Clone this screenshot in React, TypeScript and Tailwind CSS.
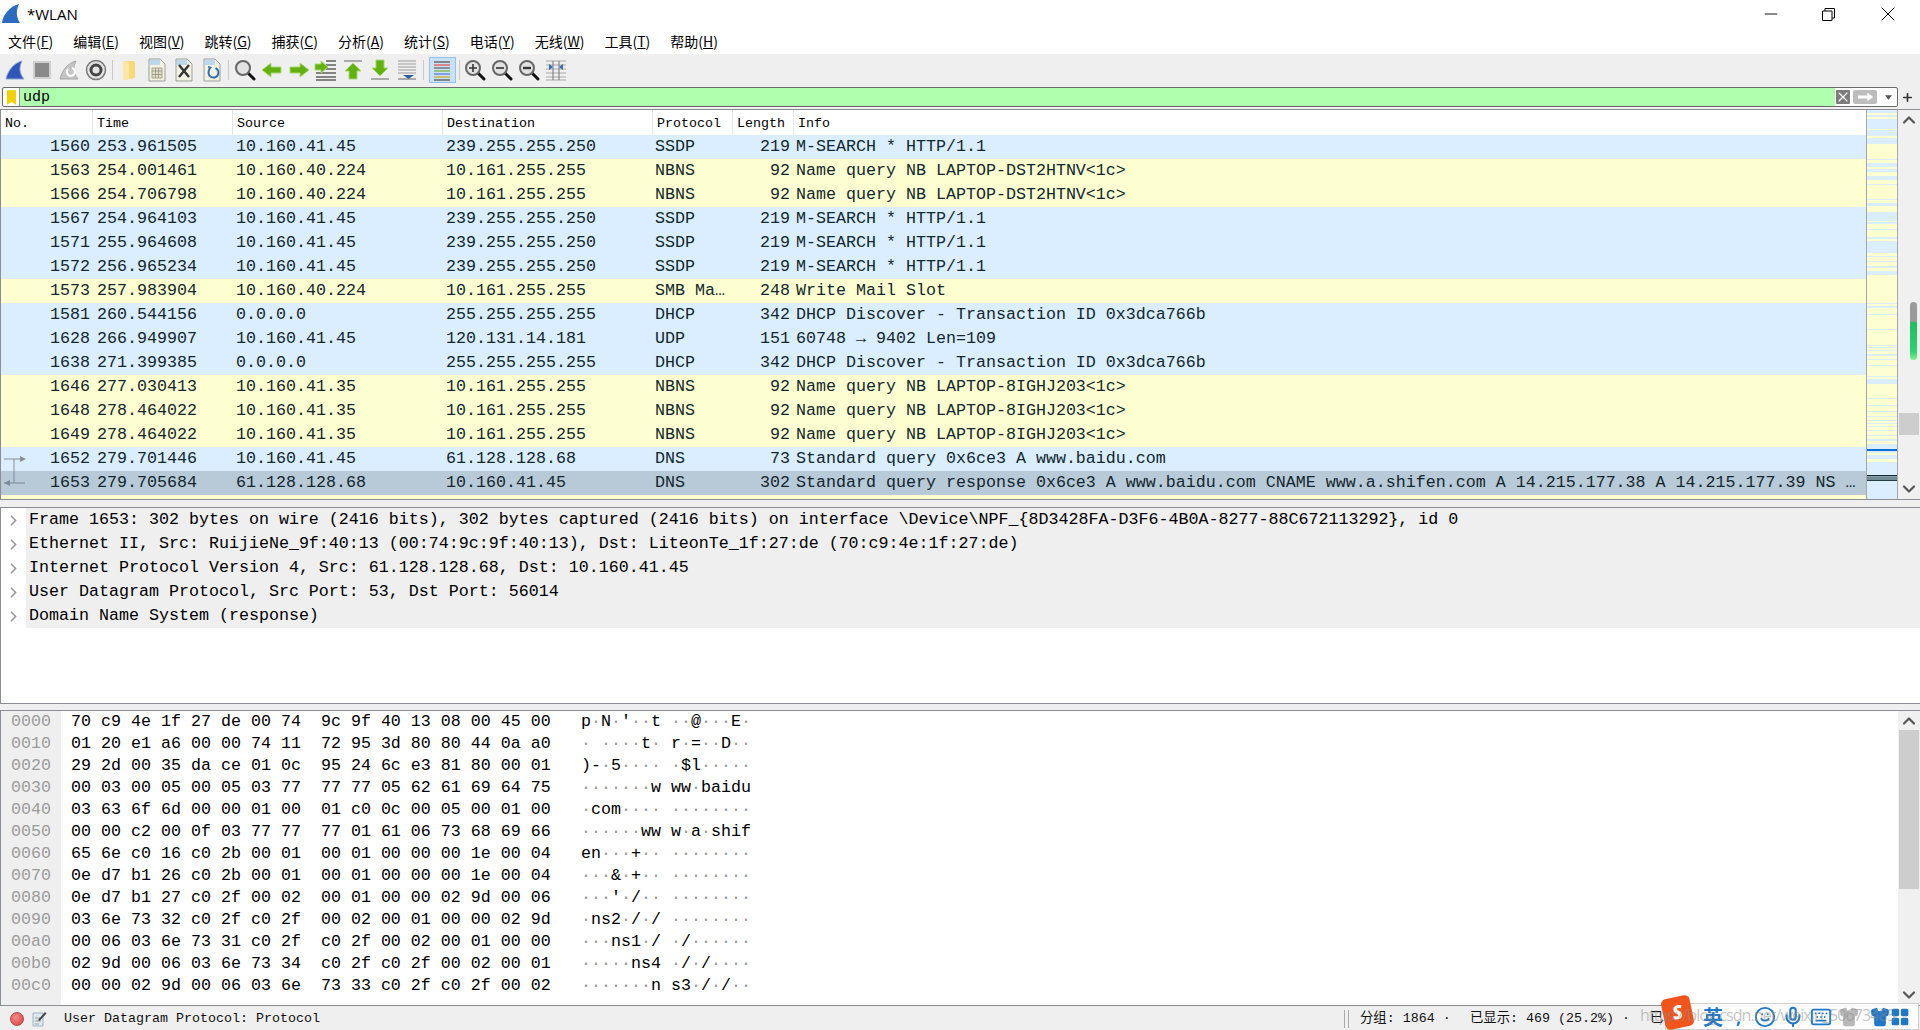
import { ChevronDown, ChevronRight, ChevronUp, Keyboard, LayoutGrid, Mic, Minus, Plus, Shirt, Smile, X } from "lucide-react";
import type { ReactNode } from "react";

const MONO = "font-['Liberation_Mono',monospace]";
const UI = "font-['Open_Sans','Noto_Sans_CJK_SC',sans-serif]";

const BLUE = "#daeeff";
const YELLOW = "#feffd0";

const menus = [
    ["文件(", "F"], ["编辑(", "E"], ["视图(", "V"], ["跳转(", "G"], ["捕获(", "C"], ["分析(", "A"],
    ["统计(", "S"], ["电话(", "Y"], ["无线(", "W"], ["工具(", "T"], ["帮助(", "H"],
];

const packets = [
    ["1560", "253.961505", "10.160.41.45", "239.255.255.250", "SSDP", "219", "M-SEARCH * HTTP/1.1"],
    ["1563", "254.001461", "10.160.40.224", "10.161.255.255", "NBNS", "92", "Name query NB LAPTOP-DST2HTNV<1c>"],
    ["1566", "254.706798", "10.160.40.224", "10.161.255.255", "NBNS", "92", "Name query NB LAPTOP-DST2HTNV<1c>"],
    ["1567", "254.964103", "10.160.41.45", "239.255.255.250", "SSDP", "219", "M-SEARCH * HTTP/1.1"],
    ["1571", "255.964608", "10.160.41.45", "239.255.255.250", "SSDP", "219", "M-SEARCH * HTTP/1.1"],
    ["1572", "256.965234", "10.160.41.45", "239.255.255.250", "SSDP", "219", "M-SEARCH * HTTP/1.1"],
    ["1573", "257.983904", "10.160.40.224", "10.161.255.255", "SMB Ma…", "248", "Write Mail Slot"],
    ["1581", "260.544156", "0.0.0.0", "255.255.255.255", "DHCP", "342", "DHCP Discover - Transaction ID 0x3dca766b"],
    ["1628", "266.949907", "10.160.41.45", "120.131.14.181", "UDP", "151", "60748 → 9402 Len=109"],
    ["1638", "271.399385", "0.0.0.0", "255.255.255.255", "DHCP", "342", "DHCP Discover - Transaction ID 0x3dca766b"],
    ["1646", "277.030413", "10.160.41.35", "10.161.255.255", "NBNS", "92", "Name query NB LAPTOP-8IGHJ203<1c>"],
    ["1648", "278.464022", "10.160.41.35", "10.161.255.255", "NBNS", "92", "Name query NB LAPTOP-8IGHJ203<1c>"],
    ["1649", "278.464022", "10.160.41.35", "10.161.255.255", "NBNS", "92", "Name query NB LAPTOP-8IGHJ203<1c>"],
    ["1652", "279.701446", "10.160.41.45", "61.128.128.68", "DNS", "73", "Standard query 0x6ce3 A www.baidu.com"],
    ["1653", "279.705684", "61.128.128.68", "10.160.41.45", "DNS", "302", "Standard query response 0x6ce3 A www.baidu.com CNAME www.a.shifen.com A 14.215.177.38 A 14.215.177.39 NS …"],
];

const details = [
    "Frame 1653: 302 bytes on wire (2416 bits), 302 bytes captured (2416 bits) on interface \\Device\\NPF_{8D3428FA-D3F6-4B0A-8277-88C672113292}, id 0",
    "Ethernet II, Src: RuijieNe_9f:40:13 (00:74:9c:9f:40:13), Dst: LiteonTe_1f:27:de (70:c9:4e:1f:27:de)",
    "Internet Protocol Version 4, Src: 61.128.128.68, Dst: 10.160.41.45",
    "User Datagram Protocol, Src Port: 53, Dst Port: 56014",
    "Domain Name System (response)",
];

const hexRows = [
    "70 c9 4e 1f 27 de 00 74 9c 9f 40 13 08 00 45 00",
    "01 20 e1 a6 00 00 74 11 72 95 3d 80 80 44 0a a0",
    "29 2d 00 35 da ce 01 0c 95 24 6c e3 81 80 00 01",
    "00 03 00 05 00 05 03 77 77 77 05 62 61 69 64 75",
    "03 63 6f 6d 00 00 01 00 01 c0 0c 00 05 00 01 00",
    "00 00 c2 00 0f 03 77 77 77 01 61 06 73 68 69 66",
    "65 6e c0 16 c0 2b 00 01 00 01 00 00 00 1e 00 04",
    "0e d7 b1 26 c0 2b 00 01 00 01 00 00 00 1e 00 04",
    "0e d7 b1 27 c0 2f 00 02 00 01 00 00 02 9d 00 06",
    "03 6e 73 32 c0 2f c0 2f 00 02 00 01 00 00 02 9d",
    "00 06 03 6e 73 31 c0 2f c0 2f 00 02 00 01 00 00",
    "02 9d 00 06 03 6e 73 34 c0 2f c0 2f 00 02 00 01",
    "00 00 02 9d 00 06 03 6e 73 33 c0 2f c0 2f 00 02",
];

// minimap bands as [y, height], y counted from the top of the packet list
const yellowBands = [
    [3, 2], [7, 2], [19, 1], [26, 2], [34, 15], [50, 3], [57, 2], [62, 4], [70, 4], [75, 14], [90, 3], [96, 6], [111, 1], [114, 5], [120, 7],
    [129, 2], [143, 3], [147, 4], [152, 4], [158, 3], [165, 28], [194, 2], [198, 6], [205, 14], [220, 15], [236, 1], [238, 2], [241, 3], [246, 3],
    [250, 5], [256, 10], [267, 2], [274, 14], [289, 6], [296, 5], [302, 4], [307, 3], [311, 2], [314, 2], [317, 3], [321, 4], [326, 3], [331, 3], [343, 2], [349, 3],
];

const grid = "grid grid-cols-[92px_140px_210px_210px_80px_61px_minmax(0,1fr)]";

function ToolIcon({ children }: { children: ReactNode }) {
    return (
        <svg viewBox="0 0 24 24" className="w-6 h-6 shrink-0">
            {children}
        </svg>
    );
}

function Fin({ gray }: { gray?: boolean }) {
    return <path d="M3 21 C5 12 11 5 19 3 C16 9 16 15 21 21 Z" fill={gray ? "#c4c4c4" : "#2f56b8"} stroke={gray ? "#a8a8a8" : "#8fa6d8"} strokeWidth="1" />;
}

function Doc({ children }: { children: ReactNode }) {
    return (
        <>
            <path d="M4 1 H15 L20 6 V23 H4 Z" fill="#f3f1df" stroke="#9aa0a0" />
            <path d="M5 2 H15 V7 H5 Z" fill="#bcd8ee" />
            {children}
        </>
    );
}

function Lens({ children }: { children?: ReactNode }) {
    return (
        <>
            <line x1="15" y1="15" x2="21" y2="21" stroke="#111" strokeWidth="3" strokeLinecap="round" />
            <circle cx="10" cy="10" r="7" fill="#e2e2e2" stroke="#666" strokeWidth="2" />
            {children}
        </>
    );
}

function Arrow({ d }: { d: string }) {
    return <path d={d} fill="#63b00f" stroke="#a6d878" strokeWidth="1" />;
}

function Toolbar() {
    return (
        <div className="flex items-center h-[30px] pl-[3px] bg-[#efefef]">
            <div className="flex gap-[3px]">
                <ToolIcon><Fin /></ToolIcon>
                <ToolIcon><rect x="4" y="4" width="16" height="16" fill="#8a8a8a" stroke="#cfcfcf" strokeWidth="2" /></ToolIcon>
                <ToolIcon><Fin gray /><path d="M15 10 a4 4 0 1 1 -4 1" fill="none" stroke="#fff" strokeWidth="2" /></ToolIcon>
                <ToolIcon>
                    <circle cx="12" cy="12" r="9.5" fill="#e4e4e4" stroke="#777" strokeWidth="1.5" />
                    <circle cx="12" cy="12" r="5" fill="none" stroke="#444" strokeWidth="3" />
                </ToolIcon>
            </div>
            <div className="w-px h-5 bg-[#c9c9c9] ml-[4px] mr-[4px]" />
            <div className="flex gap-[3.5px]">
                <ToolIcon><path d="M6 3 H17 L18 5 V20 L6 22 Z" fill="#f8d878" /><path d="M6 3 L12 4 V21 L6 22 Z" fill="#fbe7a8" /></ToolIcon>
                <ToolIcon><Doc><path d="M7 10 H17 V20 H7 Z M7 13 H17 M7 16.5 H17 M10.5 10 V20 M13.5 10 V20" fill="#e3dfc4" stroke="#8b8b7c" strokeWidth=".7" /></Doc></ToolIcon>
                <ToolIcon><Doc><path d="M7 7 L17 19 M17 7 L7 19" stroke="#333" strokeWidth="2.4" /></Doc></ToolIcon>
                <ToolIcon><Doc><path d="M15.5 10 a5 5 0 1 1 -6 1.5" fill="none" stroke="#2f6db8" strokeWidth="2" /><path d="M8 8 L12 9 L9 13 Z" fill="#2f6db8" /></Doc></ToolIcon>
            </div>
            <div className="w-px h-5 bg-[#c9c9c9] ml-[4px] mr-[4px]" />
            <div className="flex gap-[3px]">
                <ToolIcon><Lens /></ToolIcon>
                <ToolIcon><Arrow d="M2 12 L11 5 V9 H21 V15 H11 V19 Z" /></ToolIcon>
                <ToolIcon><Arrow d="M22 12 L13 5 V9 H3 V15 H13 V19 Z" /></ToolIcon>
                <ToolIcon>
                    {[3, 7, 11, 15, 19, 22].map((y) => <line key={y} x1={y < 13 ? 12 : 2} x2="22" y1={y} y2={y} stroke="#555" strokeWidth="1.4" />)}
                    <Arrow d="M14 9 L7 3 V6 H1 V12 H7 V15 Z" />
                </ToolIcon>
                <ToolIcon>
                    <line x1="3" x2="21" y1="3" y2="3" stroke="#aaa" strokeWidth="2" />
                    <Arrow d="M12 5 L20 13 H16 V21 H8 V13 H4 Z" />
                </ToolIcon>
                <ToolIcon>
                    <Arrow d="M12 18 L20 10 H16 V2 H8 V10 H4 Z" />
                    <line x1="3" x2="21" y1="21" y2="21" stroke="#aaa" strokeWidth="2" />
                </ToolIcon>
                <ToolIcon>
                    {[3, 6, 9, 12, 15].map((y) => <line key={y} x1="3" x2="21" y1={y} y2={y} stroke="#9a9a9a" />)}
                    <line x1="3" x2="21" y1="21" y2="21" stroke="#666" />
                    <path d="M8 17 H19 L13.5 21 Z" fill="#2f5f9f" />
                </ToolIcon>
            </div>
            <div className="w-px h-5 bg-[#c9c9c9] ml-[4px] mr-[5px]" />
            <div className="flex items-center justify-center w-[27px] h-[26px] bg-[#c9e0f5] border border-[#90c4ec]">
                <ToolIcon>
                    <line x1="4" x2="20" y1="4" y2="4" stroke="#555" strokeWidth="1.3" />
                    <line x1="4" x2="20" y1="7" y2="7" stroke="#e0564e" strokeWidth="1.3" />
                    <line x1="4" x2="20" y1="10" y2="10" stroke="#666" strokeWidth="1.3" />
                    <line x1="4" x2="20" y1="13" y2="13" stroke="#7db545" strokeWidth="1.3" />
                    <line x1="4" x2="20" y1="16" y2="16" stroke="#5b7fd0" strokeWidth="1.3" />
                    <line x1="4" x2="20" y1="19" y2="19" stroke="#d6a431" strokeWidth="1.3" />
                    <line x1="4" x2="20" y1="22" y2="22" stroke="#555" strokeWidth="1.3" />
                </ToolIcon>
            </div>
            <div className="w-px h-5 bg-[#c9c9c9] ml-[3px] mr-[3px]" />
            <div className="flex gap-[3px]">
                <ToolIcon><Lens><path d="M6 10 H14 M10 6 V14" stroke="#333" strokeWidth="1.6" /></Lens></ToolIcon>
                <ToolIcon><Lens><path d="M6 10 H14" stroke="#333" strokeWidth="1.6" /></Lens></ToolIcon>
                <ToolIcon><Lens><path d="M6 10 H14" stroke="#333" strokeWidth="2.4" /></Lens></ToolIcon>
                <ToolIcon>
                    {[3, 7, 11, 15, 19, 22].map((y) => <line key={y} x1="2" x2="22" y1={y} y2={y} stroke="#a9a9a9" />)}
                    <path d="M9 3 V22 M15 3 V22" stroke="#777" />
                    <path d="M5 6 L9 9 L5 12 Z M19 6 L15 9 L19 12 Z" fill="#2f6db8" />
                </ToolIcon>
            </div>
        </div>
    );
}

function FilterBar() {
    return (
        <div className="flex items-center h-[20px] mt-[2px] bg-[#efefef]">
            <div className="flex items-stretch h-[20px] ml-[2px] w-[1896px] border border-[#6b6b6b] rounded-[2px] bg-white overflow-hidden">
                <div className="flex items-center justify-center w-[17px] border-r border-[#9a9a9a]">
                    <svg viewBox="0 0 10 16" className="w-[9px] h-[15px]">
                        <path d="M0 0 H10 V16 L5 13 L0 16 Z" fill="#f3d100" />
                    </svg>
                </div>
                <div className={`flex-1 bg-[#afffaf] pl-[3px] text-[15px] leading-[20px] text-black ${MONO}`}>udp</div>
                <div className="flex items-center gap-[3px] w-[62px] pl-px">
                    <div className="flex items-center justify-center w-[14px] h-[14px] bg-[#7c7c7c] rounded-[1px]">
                        <X className="w-[16px] h-[16px] shrink-0 text-white" strokeWidth={1.6} />
                    </div>
                    <div className="flex items-center justify-center w-[24px] h-[14px] bg-[#bdbdbd] rounded-[2px]">
                        <svg viewBox="0 0 18 10" className="w-[17px] h-[10px]">
                            <path d="M1 3.5 H11 V0.5 L17 5 L11 9.5 V6.5 H1 Z" fill="#fff" />
                        </svg>
                    </div>
                    <svg viewBox="0 0 8 5" className="w-[7px] h-[5px] ml-[5px]">
                        <path d="M0 0 H8 L4 5 Z" fill="#555" />
                    </svg>
                </div>
            </div>
            <Plus className="w-[13px] h-[13px] ml-[3px] text-[#333]" strokeWidth={3} />
        </div>
    );
}

function Minimap() {
    return (
        <svg viewBox="0 0 30 389" className="w-[30px] h-[389px] shrink-0" preserveAspectRatio="none">
            <rect width="30" height="389" fill={BLUE} />
            {yellowBands.map(([y, h]) => <rect key={y} x="0" y={y} width="30" height={h} fill={YELLOW} />)}
            <rect x="0" y="339" width="30" height="2" fill="#0a6ed0" />
            <rect x="0" y="365" width="30" height="1.4" fill="#102a30" />
            <rect x="0" y="367.5" width="30" height="1" fill="#102a30" />
            <rect x="0" y="369.5" width="30" height="1.4" fill="#102a30" />
        </svg>
    );
}

function PacketList() {
    return (
        <div className={`flex h-[391px] mt-[2px] border-y border-l border-[#8b8f94] ${MONO}`}>
            <div className="flex-1 min-w-0 bg-[#feffd0] overflow-hidden">
                <div className={`${grid} h-[25px] items-center bg-white text-[13.33px] text-black`}>
                    {["No.", "Time", "Source", "Destination", "Protocol", "Length", "Info"].map((c) => (
                        <div key={c} className="h-full flex items-center pt-[2px] pl-[4px] border-r border-[#e4e4e4] last:border-r-0">{c}</div>
                    ))}
                </div>
                {packets.map((p) => {
                    const yellow = p[4] === "NBNS" || p[4].startsWith("SMB");
                    const selected = p[0] === "1653";
                    return (
                        <div key={p[0]} className={`${grid} h-[24px] leading-[24px] text-[16.67px] text-[#12272e] whitespace-pre ${selected ? "bg-[#b8c9d8]" : yellow ? "bg-[#feffd0]" : "bg-[#daeeff]"}`}>
                            <div className="relative text-right pr-[3px]">
                                {p[0] === "1652" && (
                                    <svg viewBox="0 0 24 24" className="absolute left-[2px] top-0 w-6 h-6">
                                        <path d="M1 12 H18 M11 12 V24" stroke="#8a8f93" fill="none" />
                                        <path d="M17 9 L23 12 L17 15 Z" fill="#8a8f93" />
                                    </svg>
                                )}
                                {p[0] === "1653" && (
                                    <svg viewBox="0 0 24 24" className="absolute left-[2px] top-0 w-6 h-6">
                                        <path d="M11 0 V12 M1 12 H22" stroke="#7e8a96" fill="none" />
                                        <path d="M7 9 L1 12 L7 15 Z" fill="#7e8a96" />
                                    </svg>
                                )}
                                {p[0]}
                            </div>
                            <div className="pl-[4px]">{p[1]}</div>
                            <div className="pl-[3px]">{p[2]}</div>
                            <div className="pl-[3px]">{p[3]}</div>
                            <div className="pl-[2px]">{p[4]}</div>
                            <div className="text-right pr-[4px]">{p[5]}</div>
                            <div className="pl-[2px] overflow-hidden">{p[6]}</div>
                        </div>
                    );
                })}
            </div>
            <div className="border-x border-[#a6a6a6] flex">
                <Minimap />
            </div>
            <div className="w-[22px] shrink-0 bg-[#f0f0f0] flex flex-col items-center py-[2px]">
                <ChevronUp className="w-5 h-5 -my-[2px] text-[#555]" strokeWidth={2.6} />
                <div className="w-[20px] h-[22px] bg-[#cdcdcd] mt-[285px]" />
                <ChevronDown className="w-5 h-5 -my-[2px] mt-auto text-[#555]" strokeWidth={2.6} />
            </div>
        </div>
    );
}

function Details() {
    return (
        <div className={`h-[197px] mt-[7px] border-y border-l border-[#8b8f94] bg-white ${MONO}`}>
            {details.map((d) => (
                <div key={d} className="flex h-[24px]">
                    <div className="w-[25px] flex items-center justify-center">
                        <ChevronRight className="w-[17px] h-[17px] text-[#9a9a9a]" strokeWidth={2.4} />
                    </div>
                    <div className="flex-1 bg-[#efefef] pl-[3px] text-[16.67px] leading-[24px] text-black whitespace-pre">{d}</div>
                </div>
            ))}
        </div>
    );
}

function Ascii({ row }: { row: string }) {
    const bytes = row.split(" ").map((b) => parseInt(b, 16));
    const cell = (b: number, i: number) => {
        if (b >= 0x20 && b < 0x7f) return <span key={i}>{String.fromCharCode(b)}</span>;
        return <span key={i} className="text-[#999]">·</span>;
    };
    return (
        <>
            {bytes.slice(0, 8).map(cell)} {bytes.slice(8).map((b, i) => cell(b, i + 8))}
        </>
    );
}

function HexPane() {
    return (
        <div className={`flex h-[296px] mt-[6px] border-y border-l border-[#8b8f94] bg-white ${MONO}`}>
            <div className="flex-1 min-w-0 relative">
                <div className="absolute inset-y-0 left-0 w-[60px] bg-[#efefef]" />
                <div className="relative text-[16.67px] leading-[22px] text-black whitespace-pre">
                    {hexRows.map((r, i) => (
                        <div key={i} className="flex h-[22px]">
                            <div className="w-[70px] pl-[10px] text-[#9b9b9b]">{(i * 16).toString(16).padStart(4, "0")}</div>
                            <div className="w-[510px]">{r.slice(0, 23)}  {r.slice(24)}</div>
                            <div><Ascii row={r} /></div>
                        </div>
                    ))}
                </div>
            </div>
            <div className="w-[22px] shrink-0 bg-[#f0f0f0] flex flex-col items-center py-[2px]">
                <ChevronUp className="w-5 h-5 -my-[2px] text-[#555]" strokeWidth={2.6} />
                <div className="w-[20px] h-[159px] bg-[#cdcdcd] mt-[1px]" />
                <ChevronDown className="w-5 h-5 -my-[2px] mt-auto text-[#555]" strokeWidth={2.6} />
            </div>
        </div>
    );
}

function StatusBar() {
    return (
        <div className={`flex items-center flex-1 pt-[2px] bg-[#efefef] text-[13.33px] text-[#111] whitespace-pre ${MONO}`}>
            <div className="w-[14px] h-[14px] ml-[10px] rounded-full bg-[radial-gradient(circle_at_40%_35%,#f58b8b,#d83c3c)] border border-[#b04a4a]" />
            <svg viewBox="0 0 16 16" className="w-4 h-4 ml-[7px]">
                <path d="M2 2 H12 V15 H2 Z" fill="#dfe9f2" stroke="#9db3c6" />
                <path d="M4 7 H10 M4 10 H10 M4 13 H8" stroke="#9a9a9a" />
                <path d="M7 9 L14 1 L15.5 2.5 L8.5 10 Z" fill="#444" />
            </svg>
            <span className="ml-[17px]">User Datagram Protocol: Protocol</span>
            <div className="ml-auto flex items-center w-[576px] font-['Liberation_Mono','Noto_Sans_CJK_SC',monospace]">
                <div className="w-[5px] h-[18px] border-x border-[#aaa] mr-[11px]" />
                <span className="w-[110px]">分组: 1864 ·</span>
                <span className="w-[180px]">已显示: 469 (25.2%) ·</span>
                <span>已</span>
            </div>
        </div>
    );
}

function ImeBar() {
    return (
        <div className={`absolute left-[1665px] top-[1003px] w-[254px] h-[27px] bg-white/90 border border-[#cfcfcf] flex items-center text-[#1f78c8] ${UI}`}>
            <div className="absolute left-[-3px] top-[-7px] w-[29px] h-[31px] rotate-[-12deg] rounded-[5px] bg-[#f2541b] flex items-center justify-center text-white text-[19px] font-extrabold italic leading-none">S</div>
            <span className="ml-[37px] text-[20px] font-bold leading-none font-['Noto_Sans_CJK_SC',sans-serif]">英</span>
            <span className="ml-[13px] text-[18px] font-bold leading-none">,</span>
            <Smile className="w-[22px] h-[22px] ml-[13px]" strokeWidth={2} />
            <Mic className="w-[22px] h-[22px] ml-[6px]" strokeWidth={2.2} />
            <Keyboard className="w-[24px] h-[22px] ml-[5px]" strokeWidth={2} />
            <Shirt className="w-[20px] h-[20px] ml-[6px] text-[#b9b9b9] fill-[#b9b9b9]" strokeWidth={2.4} />
            <Shirt className="w-[20px] h-[20px] ml-[11px] fill-[#1f78c8]" strokeWidth={2} />
            <LayoutGrid className="w-[20px] h-[20px] ml-0 fill-[#1f78c8]" strokeWidth={2} />
        </div>
    );
}

export default function App() {
    return (
        <div className={`relative flex flex-col w-[1920px] h-[1030px] overflow-hidden bg-[#efefef] ${UI}`}>
            {/* title bar */}
            <div className="flex items-center h-[28px] bg-white">
                <svg viewBox="0 0 18 20" className="w-[18px] h-[20px] ml-[2px]">
                    <path d="M0 19 C1 11 7 3 17 0 C14 6 14 13 18 19 Z" fill="#2a6bc0" />
                </svg>
                <span className="ml-[7px] text-[15px] text-black">*WLAN</span>
                <div className="ml-auto flex items-center">
                    <Minus className="w-5 h-5 mr-[41px] text-black" strokeWidth={1.1} />
                    <svg viewBox="0 0 13 13" className="w-[13px] h-[13px] mr-[41px]" fill="none" stroke="#000">
                        <path d="M0.5 3 H10 V12.5 H0.5 Z M3 3 V0.5 H12.5 V10 H10" />
                    </svg>
                    <X className="w-6 h-6 mr-[20px] text-black" strokeWidth={1} />
                </div>
            </div>

            {/* menu */}
            <div className="flex items-center h-[27px] pl-[8px] gap-[20px] bg-white border-b border-[#f0f0f0] text-[14px] text-black">
                {menus.map(([label, key]) => (
                    <span key={key} className="whitespace-nowrap font-['Noto_Sans_CJK_SC',sans-serif]">
                        {label}<span className="underline">{key}</span>)
                    </span>
                ))}
            </div>

            <Toolbar />
            <FilterBar />
            <PacketList />
            <Details />
            <HexPane />
            <StatusBar />

            {/* pointer overlay on the scrollbar */}
            <div className="absolute left-[1910px] top-[302px] w-[7px] h-[58px] rounded-full bg-[linear-gradient(#9a9a9a_0%,#9a9a9a_33%,#1fbf62_36%,#2fd071_85%,#86ef8a_100%)]" />

            <ImeBar />
            <div className="absolute left-[1640px] top-[1005px] text-[16px] leading-[20px] tracking-[-0.9px] text-[#8a8a8a]/50 whitespace-nowrap">https://blog.csdn.net/weixin_50673485</div>
        </div>
    );
}
